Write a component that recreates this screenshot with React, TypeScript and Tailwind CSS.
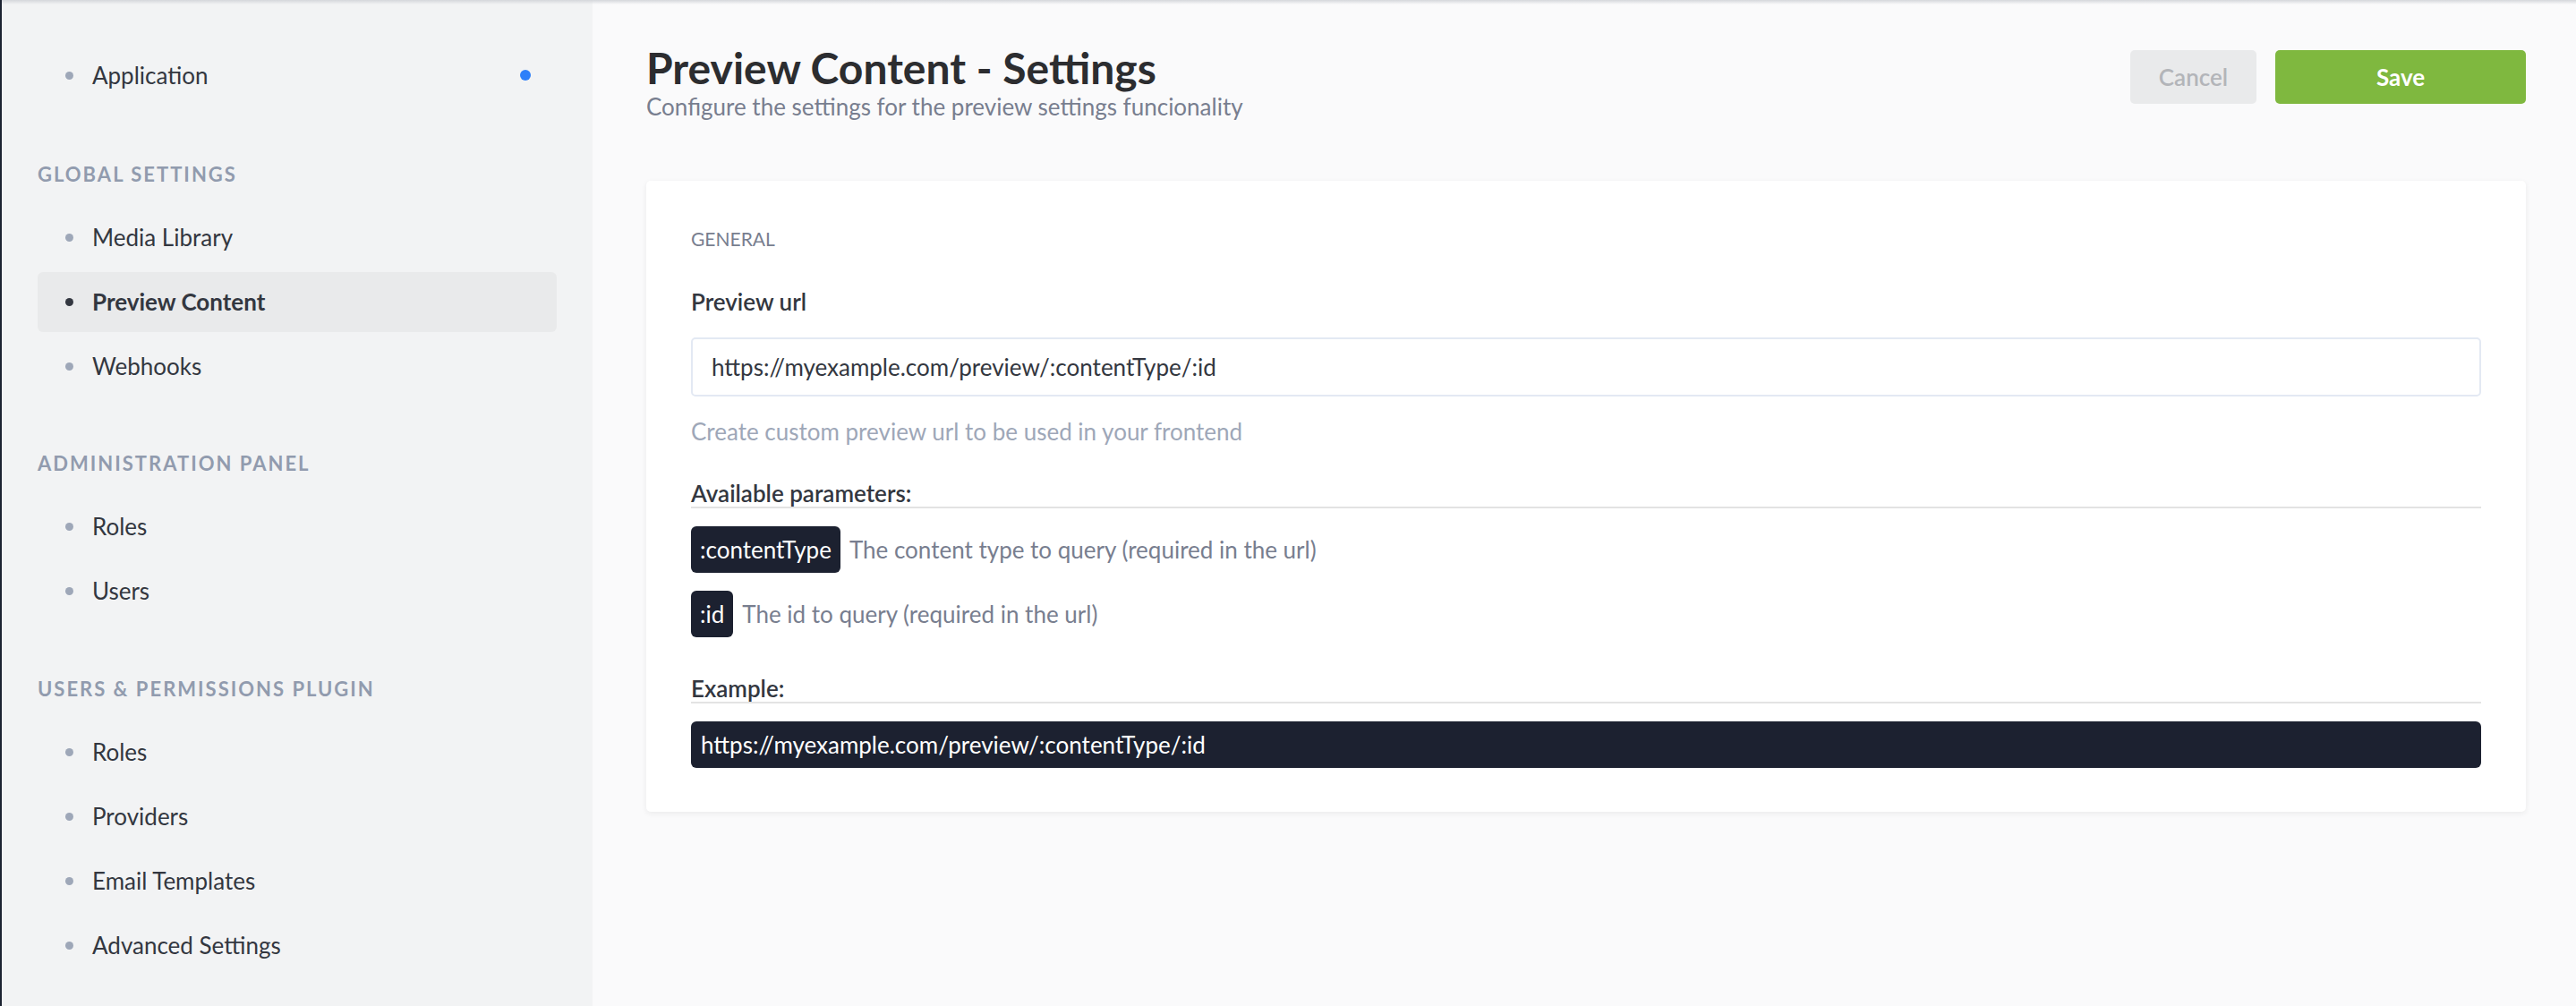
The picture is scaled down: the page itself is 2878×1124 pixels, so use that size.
import React from 'react'

type Item = { label: string; active?: boolean; dot?: boolean }

const sections: { title?: string; mt: string; items: Item[] }[] = [
  { mt: 'mt-0', items: [{ label: 'Application', dot: true }] },
  {
    title: 'Global Settings',
    mt: 'mt-[59px]',
    items: [{ label: 'Media Library' }, { label: 'Preview Content', active: true }, { label: 'Webhooks' }],
  },
  { title: 'Administration Panel', mt: 'mt-[57px]', items: [{ label: 'Roles' }, { label: 'Users' }] },
  {
    title: 'Users & Permissions Plugin',
    mt: 'mt-[58px]',
    items: [{ label: 'Roles' }, { label: 'Providers' }, { label: 'Email Templates' }, { label: 'Advanced Settings' }],
  },
]

function NavItem({ item }: { item: Item }) {
  return (
    <div className="h-[72px] flex items-center">
      <div
        className={`h-[67px] w-full flex items-center rounded-[6px] pl-[31px] pr-[29px] ${
          item.active ? 'bg-[#e9eaeb]' : ''
        }`}
      >
        <span className={`w-[9px] h-[9px] rounded-full ${item.active ? 'bg-[#333740]' : 'bg-[#9ea7b8]'}`} />
        <span
          className={`ml-[21px] flex-1 text-[26px] leading-[32px] text-[#333740] ${
            item.active ? 'font-bold' : 'font-normal'
          }`}
        >
          {item.label}
        </span>
        {item.dot && <span className="w-[12px] h-[12px] rounded-full bg-[#2d7ff9]" />}
      </div>
    </div>
  )
}

function Param({ name, text }: { name: string; text: string }) {
  return (
    <div className="flex items-center">
      <span className="h-[52px] px-[10px] flex items-center rounded-[6px] bg-[#1c2130] text-white text-[26px]">
        {name}
      </span>
      <span className="ml-[10px] text-[26px] text-[#787e8f]">{text}</span>
    </div>
  )
}

export default function App() {
  return (
    <div className="relative h-[1124px] w-full flex overflow-hidden bg-[#fafafb] font-['Lato',sans-serif] border-l-2 border-[#1c2331]">
      {/* top shadow */}
      <div className="absolute inset-x-0 top-0 h-[5px] bg-gradient-to-b from-[#d5d7db] to-transparent" />

      {/* Sidebar */}
      <aside className="w-[660px] shrink-0 bg-[#f2f3f4] pl-[40px] pr-[40px] pt-[48px]">
        {sections.map((s, i) => (
          <div key={i} className={s.mt}>
            {s.title && (
              <div className="h-[30px] mb-[20px] flex items-center text-[22px] font-bold uppercase tracking-[2px] text-[#919bae]">
                {s.title}
              </div>
            )}
            {s.items.map((it) => (
              <NavItem key={it.label} item={it} />
            ))}
          </div>
        ))}
      </aside>

      {/* Main */}
      <main className="flex-1 pl-[60px] pr-[56px] pt-[56px]">
        <div className="flex items-start justify-between">
          <div>
            <h1 className="text-[48px] leading-[56px] -mt-[8px] font-bold text-[#2c2d30]">
              Preview Content - Settings
            </h1>
            <p className="text-[26px] leading-[32px] -mt-[1px] text-[#787e8f]">
              Configure the settings for the preview settings funcionality
            </p>
          </div>
          <div className="flex gap-[21px]">
            <button className="h-[60px] w-[141px] rounded-[5px] bg-[#e9eaeb] text-[26px] font-semibold text-[#b3b5b9]">
              Cancel
            </button>
            <button className="h-[60px] w-[280px] rounded-[5px] bg-[#7fb83f] text-[26px] font-bold text-white">
              Save
            </button>
          </div>
        </div>

        <section className="mt-[67px] bg-white rounded-[5px] shadow-[0_2px_6px_rgba(40,42,49,0.07)] px-[50px] pt-[53px] pb-[49px]">
          <div className="text-[21px] leading-[24px] uppercase text-[#787e8f]">General</div>

          <div className="mt-[42px] text-[26px] leading-[32px] font-semibold text-[#333740]">Preview url</div>
          <div className="mt-[24px] h-[66px] border-2 border-[#e3e9f3] rounded-[5px] flex items-center px-[21px] text-[26px] text-[#333740]">
            https://myexample.com/preview/:contentType/:id
          </div>
          <div className="mt-[23px] text-[26px] leading-[32px] text-[#9ea7b8]">
            Create custom preview url to be used in your frontend
          </div>

          <div className="mt-[38px] text-[26px] leading-[30px] font-semibold text-[#333740] border-b-2 border-[#e3e3e3]">
            Available parameters:
          </div>
          <div className="mt-[20px] flex flex-col gap-[20px]">
            <Param name=":contentType" text="The content type to query (required in the url)" />
            <Param name=":id" text="The id to query (required in the url)" />
          </div>

          <div className="mt-[42px] text-[26px] leading-[30px] font-semibold text-[#333740] border-b-2 border-[#e3e3e3]">
            Example:
          </div>
          <div className="mt-[20px] h-[52px] rounded-[6px] bg-[#1c2130] flex items-center px-[11px] text-[26px] text-white">
            https://myexample.com/preview/:contentType/:id
          </div>
        </section>
      </main>
    </div>
  )
}
